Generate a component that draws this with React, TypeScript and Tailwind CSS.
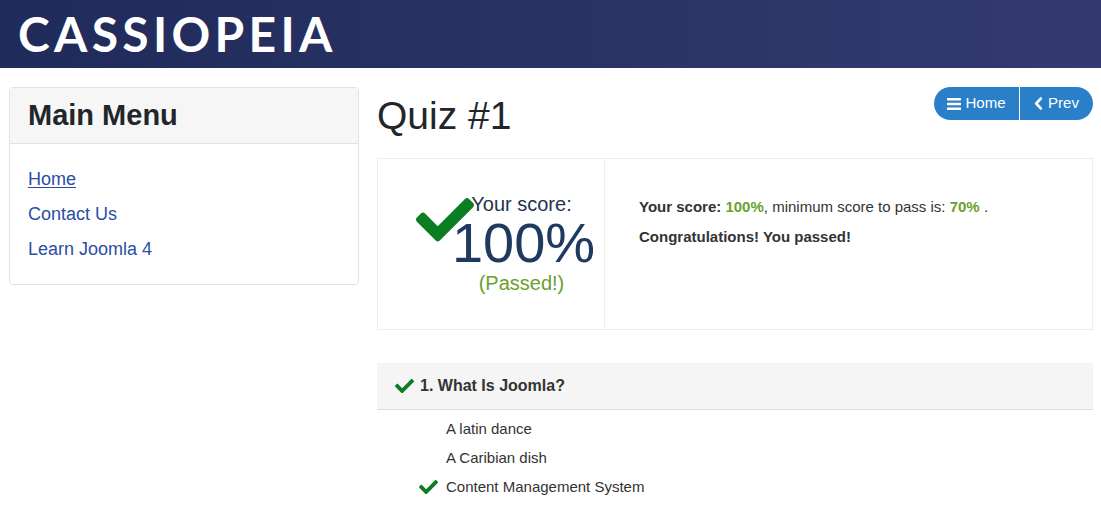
import React from "react";

function Check({ className }: { className?: string }) {
  return (
    <svg viewBox="0 64 512 384" className={className} fill="currentColor" aria-hidden="true">
      <path d="M173.898 439.404l-166.4-166.4c-9.997-9.997-9.997-26.206 0-36.204l36.203-36.204c9.997-9.998 26.207-9.998 36.204 0L192 312.69 432.095 72.596c9.997-9.997 26.207-9.997 36.204 0l36.203 36.204c9.997 9.997 9.997 26.206 0 36.204l-294.4 294.401c-9.998 9.997-26.207 9.997-36.204-.001z" />
    </svg>
  );
}

const answers = [
  { text: "A latin dance", correct: false },
  { text: "A Caribian dish", correct: false },
  { text: "Content Management System", correct: true },
];

export default function App() {
  return (
    <div className="min-h-[509px] bg-white font-['Liberation_Sans',Arial,sans-serif] text-[#22262a]">
      <header className="flex h-[68px] items-center bg-gradient-to-r from-[#1f2b5a] to-[#343a70] px-[18px]">
        <span className="font-['Lato',sans-serif] text-[48px] font-bold leading-none tracking-[4.3px] text-white">
          CASSIOPEIA
        </span>
      </header>

      <div className="flex gap-[18px] pl-[9px] pr-[8px] pt-[19px]">
        <aside className="w-[350px] shrink-0 self-start rounded-[4px] border border-[#dfe3e7]">
          <div className="flex h-[56px] items-center border-b border-[#dfe3e7] bg-[#f6f6f6] px-[18px]">
            <h3 className="text-[29px] font-bold text-[#22262a]">Main Menu</h3>
          </div>
          <ul className="flex flex-col gap-[13px] px-[18px] pb-[24px] pt-[24px] text-[18px] leading-[22px] text-[#2a4ea3]">
            <li><a href="#" className="underline underline-offset-2">Home</a></li>
            <li><a href="#">Contact Us</a></li>
            <li><a href="#">Learn Joomla 4</a></li>
          </ul>
        </aside>

        <main className="flex-1">
          <div className="flex items-start justify-between">
            <h1 className="mt-[5px] text-[39px] leading-[48px] text-[#22262a]">Quiz #1</h1>
            <div className="flex text-[15px] text-white">
              <button className="flex h-[33px] w-[85px] items-center justify-center gap-[4px] rounded-l-full bg-[#2a7fc9]">
                <svg viewBox="0 0 14 12" className="h-[12px] w-[14px]" fill="currentColor">
                  <rect x="0" y="0" width="14" height="2.4" rx="0.6" />
                  <rect x="0" y="4.8" width="14" height="2.4" rx="0.6" />
                  <rect x="0" y="9.6" width="14" height="2.4" rx="0.6" />
                </svg>
                Home
              </button>
              <button className="ml-px flex h-[33px] w-[73px] items-center justify-center gap-[5px] rounded-r-full bg-[#2a7fc9]">
                <svg viewBox="0 0 10 14" className="h-[13px] w-[9px]" fill="none" stroke="currentColor" strokeWidth="3" strokeLinecap="round" strokeLinejoin="round">
                  <path d="M7.5 1.5 2.5 7l5 5.5" />
                </svg>
                Prev
              </button>
            </div>
          </div>

          <div className="mt-[18px] flex h-[172px] border border-[#eeeeee]">
            <div className="relative flex w-[227px] shrink-0 justify-center border-r border-[#eeeeee] pl-[65px] pt-[33px]">
              <Check className="absolute left-[38px] top-[39px] w-[58px] text-[#0b7d22]" />
              <div className="flex flex-col items-center">
                <span className="mr-[4px] text-[20px] leading-[24px] text-[#22344f]">Your score:</span>
                <span className="text-[56px] leading-[54px] text-[#1f3a60]">100%</span>
                <span className="mr-[4px] text-[20px] leading-[26px] text-[#6aa12e]">(Passed!)</span>
              </div>
            </div>
            <div className="flex flex-col gap-[12px] pl-[34px] pt-[39px] text-[15px] leading-[18px] text-[#333]">
              <p>
                <b>Your score: </b>
                <b className="text-[#6aa12e]">100%</b>, minimum score to pass is: <b className="text-[#6aa12e]">70%</b> .
              </p>
              <p className="font-bold">Congratulations! You passed!</p>
            </div>
          </div>

          <section className="mt-[33px]">
            <div className="flex h-[47px] items-center gap-[6px] border-b border-[#dddddd] bg-[#f5f5f5] pl-[18px]">
              <Check className="w-[19px] text-[#0b7d22]" />
              <h4 className="text-[16px] font-bold text-[#333]">1. What Is Joomla?</h4>
            </div>
            <ul className="flex flex-col gap-[11px] pt-[10px] text-[15px] leading-[18px] text-[#333]">
              {answers.map((a) => (
                <li key={a.text} className="flex items-center">
                  <span className="flex w-[69px] justify-end pr-[8px]">
                    {a.correct && <Check className="w-[19px] text-[#0b7d22]" />}
                  </span>
                  {a.text}
                </li>
              ))}
            </ul>
          </section>
        </main>
      </div>
    </div>
  );
}
